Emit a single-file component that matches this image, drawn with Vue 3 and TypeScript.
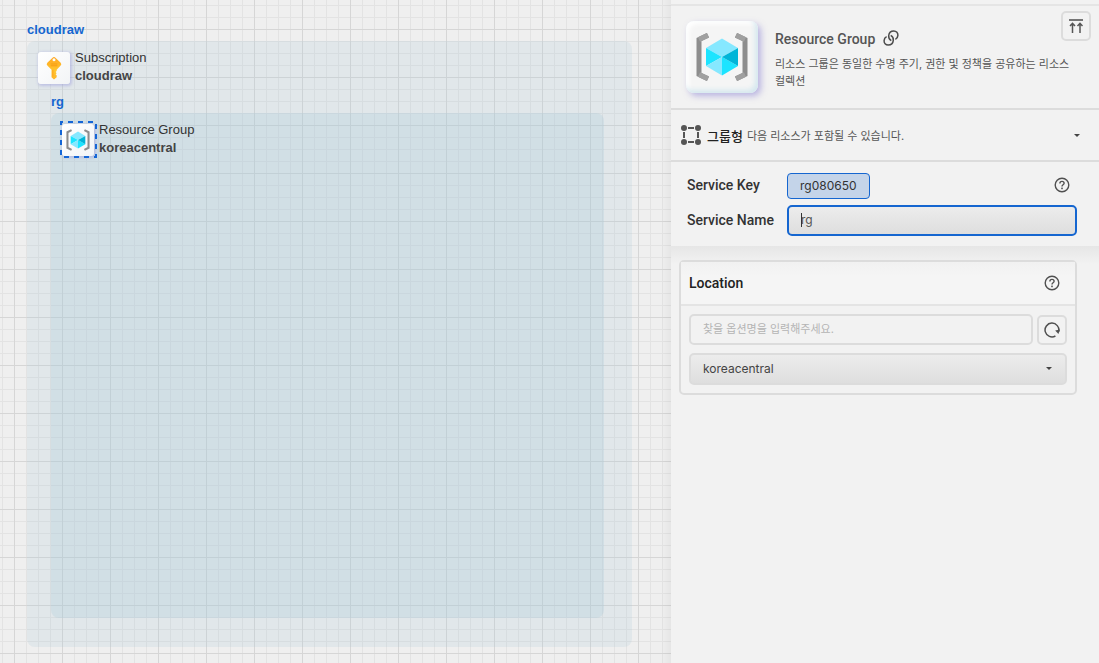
<script setup lang="ts">
import { ref } from 'vue'

const serviceName = ref('rg')
const optionQuery = ref('')
const location = ref('koreacentral')
const locations = ['koreacentral', 'koreasouth', 'japaneast', 'eastus']
</script>

<template>
  <div class="workspace">
    <main class="canvas">
      <section class="zone outer" aria-label="cloudraw">
        <h2 class="zone-title">cloudraw</h2>
        <div class="node">
          <span class="tile">
            <svg viewBox="0 0 18 26" width="16" height="24" aria-hidden="true">
              <defs>
                <linearGradient id="key-fill" x1="0" y1="0" x2="0" y2="1">
                  <stop offset="0" stop-color="#ffa51f" />
                  <stop offset="0.6" stop-color="#ffc52f" />
                  <stop offset="1" stop-color="#ffb52a" />
                </linearGradient>
              </defs>
              <path fill="url(#key-fill)" fill-rule="evenodd" d="M7.4 1.4Q9 0 10.6 1.4L16.5 7Q18 8.6 16.5 10.3L12 15V16.5L10.8 17.6L12 18.8L10.8 20L12 21.2V23.4L9 26L6.2 23.4V15L1.5 10.3Q0 8.6 1.5 7ZM9 2.1A1.7 1.7 0 1 0 9 5.5A1.7 1.7 0 1 0 9 2.1Z" />
              <path d="M5.2 8.5H12.8M5.2 10.5H12.8" stroke="#f59a10" stroke-width="1" />
              <path d="M7.7 15V22.5" stroke="#ff9f1c" stroke-width="1" />
            </svg>
          </span>
          <p class="node-text">Subscription<br /><strong>cloudraw</strong></p>
        </div>

        <section class="zone inner" aria-label="rg">
          <h2 class="zone-title">rg</h2>
          <div class="node">
            <span class="tile">
              <svg viewBox="0 0 52 48" width="24" height="22" aria-hidden="true">
                <path d="M12 2.6L3 7V41L12 45.4M40 2.6L49 7V41L40 45.4" fill="none" stroke="#8d8d8d" stroke-width="4.5" />
                <path d="M26 5.5L42 15L26 24L10 15Z" fill="#86e8ff" />
                <path d="M10 15L26 24L10 33ZM42 33L26 24V42.5Z" fill="#1ce4ff" />
                <path d="M42 15V33L26 24Z" fill="#00b5d8" />
                <path d="M10 33L26 24V42.5Z" fill="#86e8ff" />
              </svg>
            </span>
            <svg class="selection" viewBox="0 0 37 37" width="37" height="37" aria-hidden="true">
              <rect x="1" y="1" width="35" height="35" fill="none" stroke="#1566d6" stroke-width="2" stroke-dasharray="5 5" stroke-dashoffset="3" />
            </svg>
            <p class="node-text">Resource Group<br /><strong>koreacentral</strong></p>
          </div>
        </section>
      </section>
    </main>

    <aside class="panel">
      <header class="intro">
        <span class="hero">
          <svg viewBox="0 0 52 48" width="52" height="48" aria-hidden="true">
            <path d="M12 2.2L3 6.5V41.5L12 45.8M40 2.2L49 6.5V41.5L40 45.8" fill="none" stroke="#8d8d8d" stroke-width="5" />
            <path d="M12 2.2L3 6.5M12 45.8L3 41.5M40 2.2L49 6.5M40 45.8L49 41.5" stroke="#a0a0a0" stroke-width="5" />
            <path d="M26 5.5L42 15L26 24L10 15Z" fill="#86e8ff" />
            <path d="M10 15L26 24L10 33ZM42 33L26 24V42.5Z" fill="#1ce4ff" />
            <path d="M42 15V33L26 24Z" fill="#00b5d8" />
            <path d="M10 33L26 24V42.5Z" fill="#86e8ff" />
          </svg>
        </span>
        <div class="intro-text">
          <h1>
            Resource Group
            <a class="doc-link" href="#" aria-label="Documentation">
              <svg viewBox="0 0 16 16" width="16" height="16" aria-hidden="true">
                <g fill="none" stroke="#4c4c4c" stroke-width="1.5">
                  <path d="M8.3 10.6C6.3 9.6 5.5 7.6 5.7 5.6C6 2.9 8.2 1 10.8 1C13.4 1 15.1 3 14.9 5.4C14.8 7.2 13.8 8.6 12.4 9.3" />
                  <path d="M7.7 5.4C9.7 6.4 10.5 8.4 10.3 10.4C10 13.1 7.8 15 5.2 15C2.6 15 0.9 13 1.1 10.6C1.2 8.8 2.2 7.4 3.6 6.7" />
                </g>
              </svg>
            </a>
          </h1>
          <p>리소스 그룹은 동일한 수명 주기, 권한 및 정책을 공유하는 리소스 컬렉션</p>
        </div>
        <button class="icon-button to-top" type="button" aria-label="Collapse to top">
          <svg viewBox="0 0 14 14" width="14" height="14" aria-hidden="true">
            <path d="M0 1H14" stroke="#555" stroke-width="1.6" />
            <path d="M3.5 14V4.5M1 7L3.5 4.3L6 7M11 14V4.5M8.5 7L11 4.3L13.5 7" fill="none" stroke="#555" stroke-width="1.5" />
          </svg>
        </button>
      </header>

      <button class="group-row" type="button">
        <svg viewBox="0 0 20 20" width="20" height="20" aria-hidden="true">
          <g fill="#555">
            <circle cx="3" cy="3" r="3" /><circle cx="17" cy="3" r="3" />
            <circle cx="3" cy="17" r="3" /><circle cx="17" cy="17" r="3" />
          </g>
          <path d="M7 3H13M7 17H13M3 7V13M17 7V13" stroke="#555" stroke-width="2" />
        </svg>
        <span class="group-name">그룹형</span>
        <span class="group-note">다음 리소스가 포함될 수 있습니다.</span>
        <svg class="arrow" viewBox="0 0 6 3" width="6" height="3" aria-hidden="true"><path d="M0 0H6L3 3Z" fill="#444" /></svg>
      </button>

      <form class="service" @submit.prevent>
        <div class="field">
          <label for="service-key">Service Key</label>
          <output id="service-key">rg080650</output>
          <button class="help" type="button" aria-label="Service key help">
            <svg viewBox="0 0 16 16" width="16" height="16" aria-hidden="true">
              <circle cx="8" cy="8" r="6.8" fill="none" stroke="#505050" stroke-width="1.4" />
              <path d="M5.9 6.4C5.9 3.7 10.1 3.8 10.1 6.3C10.1 7.8 8 7.7 8 9.4" fill="none" stroke="#505050" stroke-width="1.4" />
              <rect x="7.2" y="10.6" width="1.6" height="1.6" fill="#505050" />
            </svg>
          </button>
        </div>
        <div class="field">
          <label for="service-name">Service Name</label>
          <div class="name-box">
            <input id="service-name" v-model="serviceName" type="text" />
            <span class="caret"></span>
          </div>
        </div>
      </form>

      <div class="options">
        <section class="card">
          <header class="card-head">
            <h2>Location</h2>
            <button class="help" type="button" aria-label="Location help">
              <svg viewBox="0 0 16 16" width="16" height="16" aria-hidden="true">
                <circle cx="8" cy="8" r="6.8" fill="none" stroke="#505050" stroke-width="1.4" />
                <path d="M5.9 6.4C5.9 3.7 10.1 3.8 10.1 6.3C10.1 7.8 8 7.7 8 9.4" fill="none" stroke="#505050" stroke-width="1.4" />
                <rect x="7.2" y="10.6" width="1.6" height="1.6" fill="#505050" />
              </svg>
            </button>
          </header>
          <div class="card-body">
            <div class="search">
              <input v-model="optionQuery" type="text" aria-label="옵션명" placeholder="찾을 옵션명을 입력해주세요." />
              <button class="icon-button" type="button" aria-label="Reload">
                <svg viewBox="0 0 16 16" width="16" height="16" aria-hidden="true">
                  <path d="M11.4 14A6.9 6.9 0 1 1 14.7 9.5" fill="none" stroke="#505050" stroke-width="1.5" />
                  <path d="M11.2 8.4L16 7.6L14.4 12Z" fill="#505050" />
                </svg>
              </button>
            </div>
            <div class="select-box">
              <select v-model="location" aria-label="Location">
                <option v-for="item in locations" :key="item" :value="item">{{ item }}</option>
              </select>
              <svg class="select-arrow" viewBox="0 0 6 3" width="6" height="3" aria-hidden="true"><path d="M0 0H6L3 3Z" fill="#444" /></svg>
            </div>
          </div>
        </section>
      </div>
    </aside>
  </div>
</template>

<style>
body {
  margin: 0;
}
</style>

<style scoped>
.workspace,
.workspace * {
  box-sizing: border-box;
}
.workspace {
  display: flex;
  min-height: 100vh;
  font-family: Inter, 'Noto Sans CJK KR', sans-serif;
  color: #333;
}
h1,
h2,
p {
  margin: 0;
}
button,
input,
select {
  font-family: inherit;
}
button {
  padding: 0;
  border: 0;
  background: none;
}
svg {
  display: block;
  flex: none;
}

/* canvas */
.canvas {
  position: relative;
  flex: 1;
  min-width: 0;
  overflow: hidden;
  background-color: #efefef;
  background-image:
    linear-gradient(90deg, #d6d6d6 1px, transparent 1px),
    linear-gradient(#d6d6d6 1px, transparent 1px),
    linear-gradient(90deg, #e3e3e3 1px, transparent 1px),
    linear-gradient(#e3e3e3 1px, transparent 1px);
  background-size: 48px 48px, 48px 48px, 12px 12px, 12px 12px;
  background-position: 14px 29px, 14px 29px, 2px 5px, 2px 5px;
  font-family: 'Liberation Sans', Arial, sans-serif;
}
.canvas::after {
  content: '';
  position: absolute;
  inset: 0 0 0 auto;
  width: 10px;
  background: linear-gradient(90deg, transparent, rgba(0, 0, 0, 0.04));
}
.zone {
  position: absolute;
  border-radius: 8px;
  background: rgba(170, 198, 215, 0.2);
}
.outer {
  left: 27px;
  top: 41px;
  width: 605px;
  height: 606px;
}
.inner {
  left: 24px;
  top: 72px;
  width: 553px;
  height: 505px;
  background: rgba(162, 198, 215, 0.25);
}
.zone-title {
  position: absolute;
  left: 0;
  top: -19px;
  font-size: 13px;
  line-height: 16px;
  color: #1566d0;
}
.node {
  position: absolute;
  left: 11px;
  top: 8px;
  display: flex;
  gap: 5px;
}
.tile {
  display: flex;
  align-items: center;
  justify-content: center;
  width: 32px;
  height: 32px;
  margin-top: 3px;
  border-radius: 3px;
  background: linear-gradient(135deg, #fff, #f2f4f6);
  box-shadow: 1px 1px 3px 1px rgba(150, 150, 220, 0.45);
}
.selection {
  position: absolute;
  left: -2px;
  top: 0;
}
.node-text {
  font-size: 13px;
  line-height: 18px;
  white-space: nowrap;
}
.node-text strong {
  color: #444;
}

/* side panel */
.panel {
  display: flex;
  flex-direction: column;
  flex: none;
  width: 428px;
  padding-top: 4px;
  background: #f2f2f2;
}
.panel h1,
.panel h2,
.panel label {
  font-family: Roboto, sans-serif;
  font-size: 14px;
  font-weight: 500;
}
.intro {
  display: flex;
  padding: 15px 8px 15px 15px;
  border-top: 2px solid #e5e5e5;
  border-bottom: 2px solid #dcdcdc;
}
.hero {
  display: flex;
  flex: none;
  align-items: center;
  justify-content: center;
  width: 72px;
  height: 72px;
  border-radius: 8px;
  background: #f5f5f5;
  box-shadow:
    inset -3px -3px 5px #d5e8ef,
    inset 3px 3px 5px #fff,
    3px 3px 6px rgba(130, 120, 210, 0.5);
}
.intro-text {
  flex: 1;
  padding: 8px 0 0 17px;
  margin-right: -16px;
}
.intro h1 {
  display: flex;
  align-items: center;
  gap: 8px;
  line-height: 20px;
  color: #555;
}
.doc-link {
  padding-bottom: 3px;
}
.intro p {
  margin-top: 7px;
  font-size: 11px;
  line-height: 17px;
  color: #555;
}
.icon-button {
  display: flex;
  flex: none;
  align-items: center;
  justify-content: center;
  width: 30px;
  height: 30px;
  border: 2px solid #dcdcdc;
  border-radius: 5px;
}
.to-top {
  margin-top: -10px;
}
.group-row {
  display: flex;
  align-items: center;
  height: 52px;
  padding: 0 19px 0 10px;
  border-bottom: 2px solid #dcdcdc;
  text-align: left;
}
.group-name {
  margin: 0 4px 0 6px;
  font-size: 13px;
  font-weight: 500;
  color: #222;
}
.group-note {
  flex: 1;
  font-size: 11px;
  color: #555;
}
.service {
  display: flex;
  flex-direction: column;
  gap: 6px;
  padding: 11px 22px 10px 16px;
}
.field {
  display: flex;
  align-items: center;
}
.field label {
  flex: none;
  width: 100px;
  padding-bottom: 2px;
}
output {
  padding: 0 12px;
  border: 1px solid #1566d0;
  border-radius: 4px;
  background: #c4d4e9;
  font-size: 12px;
  line-height: 24px;
}
.help {
  margin: 0 7px 0 auto;
}
.field .help {
  padding-bottom: 2px;
}
.name-box {
  position: relative;
  flex: 1;
}
input,
select {
  display: block;
  width: 100%;
  margin: 0;
  padding: 0 12px 2px;
  border: 2px solid #dcdcdc;
  border-radius: 5px;
  outline: 0;
  background: transparent;
  font-size: 12px;
  color: #444;
}
input {
  height: 31px;
}
.name-box input {
  border-color: #1566d0;
  background: linear-gradient(#ececec, #dedede);
  color: #555;
}
.caret {
  position: absolute;
  left: 14px;
  top: 8px;
  width: 1px;
  height: 14px;
  background: #333;
}
.options {
  flex: 1;
  padding: 14px 22px 16px 8px;
  background: linear-gradient(#e6e6e6, #f2f2f2 18px);
}
.card {
  border: 2px solid #dcdcdc;
  border-radius: 5px;
}
.card-head {
  display: flex;
  align-items: center;
  height: 44px;
  padding-left: 8px;
  border-bottom: 2px solid #e4e4e4;
  background: linear-gradient(#f1f1f1, #f5f5f5 14px);
}
.card-head h2 {
  color: #222;
}
.card-head .help {
  margin-right: 15px;
}
.card-body {
  display: flex;
  flex-direction: column;
  gap: 8px;
  padding: 8px;
}
.search {
  display: flex;
  align-items: flex-end;
  gap: 4px;
}
.search input {
  font-size: 11px;
}
.search input::placeholder {
  color: #b4b4b4;
}
.select-box {
  position: relative;
}
select {
  height: 32px;
  appearance: none;
  background: linear-gradient(#ececec, #dedede);
}
.select-arrow {
  position: absolute;
  right: 15px;
  top: 14px;
  pointer-events: none;
}
</style>
